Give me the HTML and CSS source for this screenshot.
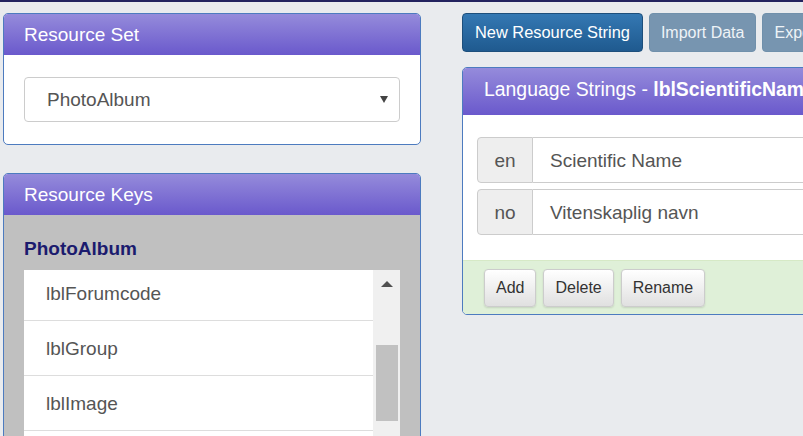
FILE: index.html
```html
<!DOCTYPE html>
<html lang="en">
<head>
<meta charset="utf-8">
<title>Resource Editor</title>
<link rel="stylesheet" href="styles.css">
</head>
<body>
<div class="topbar"></div>
<div class="page">
  <div class="left">
    <section class="panel">
      <div class="panel-head">Resource Set</div>
      <div class="set-body">
        <div class="select">
          <span>PhotoAlbum</span>
          <svg class="caret" width="8" height="7" viewBox="0 0 8 7"><polygon points="0,0 8,0 4,7" fill="#444"/></svg>
        </div>
      </div>
    </section>
    <section class="panel">
      <div class="panel-head">Resource Keys</div>
      <div class="keys-body">
        <div class="set-name">PhotoAlbum</div>
        <div class="keys-list">
          <div class="items">
            <div class="items-inner">
              <div class="item">lblForumcode</div>
              <div class="item">lblGroup</div>
              <div class="item">lblImage</div>
              <div class="item">lblLatinName</div>
            </div>
          </div>
          <div class="scrollbar">
            <div class="scroll-up"><svg width="12" height="6" viewBox="0 0 12 6"><polygon points="0,6 12,6 6,0" fill="#505050"/></svg></div>
            <div class="thumb"></div>
          </div>
        </div>
      </div>
    </section>
  </div>
  <div class="right">
    <div class="toolbar">
      <button class="btn btn-primary">New Resource String</button>
      <button class="btn btn-muted">Import Data</button>
      <button class="btn btn-muted">Export Data</button>
    </div>
    <section class="panel lang-panel">
      <div class="panel-head lang-head">Language Strings - <b>lblScientificName</b></div>
      <div class="lang-body">
        <div class="input-group">
          <span class="addon">en</span>
          <span class="field">Scientific Name</span>
        </div>
        <div class="input-group">
          <span class="addon">no</span>
          <span class="field">Vitenskaplig navn</span>
        </div>
      </div>
      <div class="lang-foot">
        <button class="btn btn-default">Add</button>
        <button class="btn btn-default">Delete</button>
        <button class="btn btn-default">Rename</button>
      </div>
    </section>
  </div>
</div>
</body>
</html>
```
FILE: styles.css
```css
* { box-sizing: border-box; }
html, body {
  margin: 0;
  height: 436px;
  overflow: hidden;
}
body {
  background: #e9ebee;
  font-family: "Liberation Sans", Arial, sans-serif;
  color: #555;
}
.topbar {
  height: 2px;
  background: #23235f;
}
.page {
  display: flex;
  gap: 41px;
  padding: 11px 0 0 3px;
}
.left {
  width: 418px;
  flex: none;
  display: flex;
  flex-direction: column;
  gap: 28px;
}
.right {
  width: 540px;
  flex: none;
}
.panel {
  border: 1px solid #4d7bbf;
  border-radius: 5px;
  background: #fff;
  overflow: hidden;
}
.panel-head {
  background: linear-gradient(to bottom, #958bdb, #6a59cc);
  color: #fff;
  font-size: 19px;
  line-height: 22px;
  padding: 10px 20px 9px;
  white-space: nowrap;
}
.set-body {
  padding: 22px 20px;
}
.select {
  height: 45px;
  border: 1px solid #ccc;
  border-radius: 4px;
  padding: 0 11px 0 22px;
  display: flex;
  align-items: center;
  justify-content: space-between;
  font-size: 19px;
  color: #555;
  background: #fff;
}
.caret { display: block; }
.keys-body {
  background: #c0c0c0;
  padding: 23px 20px 0;
  height: 260px;
}
.set-name {
  font-weight: bold;
  font-size: 19px;
  line-height: 22px;
  color: #1b1b6e;
  margin-bottom: 10px;
}
.keys-list {
  display: flex;
  background: #fff;
  height: 210px;
}
.items {
  flex: 1;
  overflow: hidden;
}
.items-inner {
  margin-top: -4px;
}
.item {
  height: 55px;
  border-bottom: 1px solid #ddd;
  padding: 17px 22px 0;
  font-size: 19px;
  line-height: 22px;
  color: #555;
}
.scrollbar {
  width: 27px;
  flex: none;
  background: #f0f0f0;
  display: flex;
  flex-direction: column;
}
.scroll-up {
  height: 30px;
  padding-top: 11px;
  display: flex;
  justify-content: center;
}
.scroll-up svg { display: block; }
.thumb {
  margin: 45px 0 0 3px;
  width: 22px;
  height: 76px;
  background: #c1c1c1;
}
.toolbar {
  display: flex;
  gap: 6px;
  margin-bottom: 15px;
}
.btn {
  font-family: "Liberation Sans", Arial, sans-serif;
  font-size: 16.4px;
  height: 39px;
  padding: 0 12px;
  border: 1px solid transparent;
  border-radius: 4px;
  white-space: nowrap;
  flex: none;
}
.btn-primary {
  background: linear-gradient(to bottom, #3478b3, #1f5a8f);
  border-color: #1d4f7c;
  color: #fff;
}
.btn-muted {
  background: #7795b0;
  border-color: #7090ab;
  color: #eef3f7;
  padding: 0 11px;
  font-size: 16px;
}
.lang-panel {
  width: 540px;
}
.lang-head {
  padding: 10px 21px 0;
  height: 47px;
  font-size: 19.4px;
}
.lang-body {
  padding: 22px 0 25px 14px;
  display: flex;
  flex-direction: column;
  gap: 6px;
}
.input-group {
  display: flex;
  height: 46px;
}
.addon {
  width: 56px;
  flex: none;
  background: #eee;
  border: 1px solid #ccc;
  border-radius: 4px 0 0 4px;
  text-align: center;
  font-size: 19px;
  line-height: 22px;
  padding-top: 12px;
  color: #555;
}
.field {
  flex: 1;
  border: 1px solid #ccc;
  border-left: none;
  font-size: 19px;
  line-height: 22px;
  padding: 12px 17px 0;
  color: #555;
}
.lang-foot {
  background: #dff0d8;
  border-top: 1px solid #d6e9c6;
  padding: 8px 21px 7px;
  display: flex;
  gap: 7px;
}
.btn-default {
  height: 38px;
  padding: 0 11px;
  font-size: 16px;
  background: linear-gradient(to bottom, #ffffff, #e0e0e0);
  border-color: #ccc;
  color: #333;
  box-shadow: 0 1px 2px rgba(0, 0, 0, 0.12);
}
```
